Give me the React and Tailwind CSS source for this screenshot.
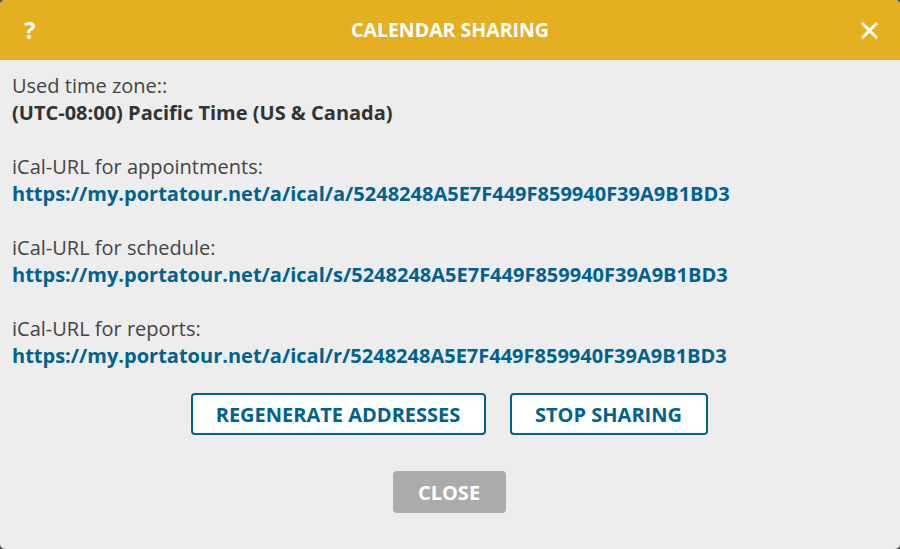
import React from "react";

const font = { fontFamily: '"Open Sans", "Noto Sans", sans-serif' };

const links = [
  { label: "iCal-URL for appointments:", url: "https://my.portatour.net/a/ical/a/5248248A5E7F449F859940F39A9B1BD3" },
  { label: "iCal-URL for schedule:", url: "https://my.portatour.net/a/ical/s/5248248A5E7F449F859940F39A9B1BD3" },
  { label: "iCal-URL for reports:", url: "https://my.portatour.net/a/ical/r/5248248A5E7F449F859940F39A9B1BD3" },
];

function CloseIcon() {
  return (
    <svg width="17" height="17" viewBox="0 0 17 17" fill="none">
      <path d="M2 2L15 15M15 2L2 15" stroke="white" strokeWidth="3" strokeLinecap="square" />
    </svg>
  );
}

export default function App() {
  return (
    <div className="w-[900px] h-[549px] bg-[#4a4a4a]" style={font}>
      <div className="w-full h-full rounded-[5px] overflow-hidden bg-[#ededed] flex flex-col">
        <div className="h-[60px] bg-[#e5af22] flex items-center justify-between pl-[24px] pr-[22px] shrink-0">
          <span className="text-white font-bold text-[24px] w-[20px] leading-none">?</span>
          <span className="text-white font-bold text-[19.5px] -translate-x-[1px]">CALENDAR SHARING</span>
          <span className="w-[20px] flex justify-end">
            <CloseIcon />
          </span>
        </div>
        <div className="px-[12px] pt-[12px] text-[20px] leading-[27px] text-[#444]">
          <div>Used time zone::</div>
          <div className="font-bold text-[#333]">(UTC-08:00) Pacific Time (US &amp; Canada)</div>
          {links.map((l) => (
            <div key={l.url} className="mt-[27px]">
              <div>{l.label}</div>
              <a className="block font-bold text-[#00628f]">{l.url}</a>
            </div>
          ))}
          <div className="flex justify-center gap-[24px] mt-[24px] -translate-x-[1px]">
            <button className="h-[42px] w-[295px] border-2 border-[#00628f] rounded-[4px] bg-white text-[#00628f] font-bold text-[20px]">
              REGENERATE ADDRESSES
            </button>
            <button className="h-[42px] w-[198px] border-2 border-[#00628f] rounded-[4px] bg-white text-[#00628f] font-bold text-[20px]">
              STOP SHARING
            </button>
          </div>
          <div className="flex justify-center mt-[36px] -translate-x-[1px]">
            <button className="h-[42px] w-[113px] rounded-[4px] bg-[#ababab] text-white font-bold text-[20px]">
              CLOSE
            </button>
          </div>
        </div>
      </div>
    </div>
  );
}
